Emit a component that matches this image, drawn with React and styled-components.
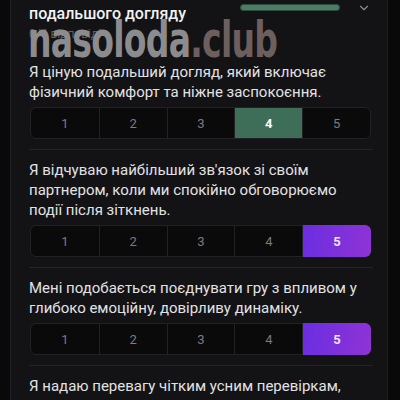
import React from "react";
import styled, { createGlobalStyle } from "styled-components";

const GlobalStyle = createGlobalStyle`
  html, body {
    margin: 0;
    padding: 0;
    background: #09090a;
    overflow: hidden;
  }
  body {
    font-family: Roboto, "Noto Sans", sans-serif;
  }
`;

const questions = [
  {
    text: "Я ціную подальший догляд, який включає фізичний комфорт та ніжне заспокоєння.",
    value: 4,
    tone: "green",
  },
  {
    text: "Я відчуваю найбільший зв'язок зі своїм партнером, коли ми спокійно обговорюємо події після зіткнень.",
    value: 5,
    tone: "purple",
  },
  {
    text: "Мені подобається поєднувати гру з впливом у глибоко емоційну, довірливу динаміку.",
    value: 5,
    tone: "purple",
  },
  {
    text: "Я надаю перевагу чітким усним перевіркам, після яких відчуваю спокій.",
    value: 0,
    tone: "purple",
  },
];

const Page = styled.div`
  position: relative;
  width: 400px;
  height: 400px;
  padding: 0 12px 0 10px;
  box-sizing: border-box;
`;

const Panel = styled.section`
  height: 100%;
  background: #131315;
  border-left: 1px solid #1f1f22;
  border-right: 1px solid #1f1f22;
  padding: 0 14px 0 18px;
  box-sizing: border-box;
`;

const Header = styled.header`
  display: flex;
  justify-content: space-between;
  align-items: flex-start;
`;

const TitleBlock = styled.div`
  display: flex;
  flex-direction: column;
  padding-top: 3px;
`;

const Title = styled.h2`
  margin: 0;
  font-size: 16px;
  font-weight: 500;
  line-height: 22px;
  color: #f2f2f2;
`;

const Subtitle = styled.div`
  font-size: 12px;
  color: #5e5e62;
  line-height: 16px;
  margin-top: 1px;
`;

const HeaderRight = styled.div`
  display: flex;
  align-items: flex-start;
  gap: 18px;
`;

const Progress = styled.div`
  width: 98px;
  height: 5px;
  margin-top: 5px;
  border-radius: 3px;
  background: #4b7c66;
  box-shadow: 0 0 0 1px #2f4a3e;
`;

const Chevron = styled.svg`
  width: 14px;
  height: 14px;
  color: #8b8b90;
  margin-top: 1px;
  margin-right: 2px;
`;

const List = styled.div`
  display: flex;
  flex-direction: column;
  margin-top: 20px;
`;

const Item = styled.div`
  display: flex;
  flex-direction: column;
  gap: 5px;
  padding: 0 0 10px;
  margin-bottom: 10px;
  border-bottom: 1px solid #242427;
`;

const Question = styled.p`
  margin: 0;
  font-size: 15px;
  line-height: 20px;
  color: #e2e2e4;
`;

const Scale = styled.div`
  display: grid;
  grid-template-columns: repeat(5, 1fr);
  height: 30px;
  margin: 0 2px 0 1px;
  border: 1px solid #222225;
  border-radius: 6px;
  background: #0a0a0b;
`;

const Option = styled.div`
  display: flex;
  align-items: center;
  justify-content: center;
  font-size: 13px;
  font-weight: ${(p) => (p.$on ? 700 : 400)};
  color: ${(p) => (p.$on ? (p.$tone === "green" ? "#ffffff" : "#f0e2ff") : "#7b7b80")};
  border-left: ${(p) => (p.$first ? "none" : "1px solid #222225")};
  background: ${(p) =>
    p.$on
      ? p.$tone === "green"
        ? "#3f6e58"
        : "linear-gradient(100deg, #6a2ee0 0%, #8f33d6 100%)"
      : "transparent"};
  border-radius: ${(p) => (p.$last ? "0 6px 6px 0" : p.$first ? "6px 0 0 6px" : "0")};
  margin: ${(p) => (p.$on && p.$last ? "-1px -1px -1px 0" : "0")};
`;

const Watermark = styled.div`
  position: absolute;
  left: 28px;
  top: 13px;
  font-family: "DejaVu Sans Condensed", "DejaVu Sans", sans-serif;
  font-weight: 700;
  font-size: 49px;
  letter-spacing: -1px;
  line-height: 56px;
  color: #8c8c8e;
  transform: scaleX(0.75);
  transform-origin: left top;
  pointer-events: none;
  white-space: nowrap;
`;

const Club = styled.span`
  color: #6e5f5f;
`;

export default function App() {
  return (
    <>
      <GlobalStyle />
      <Page>
        <Panel>
          <Header>
            <TitleBlock>
              <Title>подальшого догляду</Title>
              <Subtitle>0/4 відповіді</Subtitle>
            </TitleBlock>
            <HeaderRight>
              <Progress />
              <Chevron viewBox="0 0 24 24" fill="none" stroke="currentColor" strokeWidth="2" strokeLinecap="round" strokeLinejoin="round">
                <path d="M6 9l6 6 6-6" />
              </Chevron>
            </HeaderRight>
          </Header>
          <List>
            {questions.map((q, i) => (
              <Item key={i}>
                <Question>{q.text}</Question>
                <Scale>
                  {[1, 2, 3, 4, 5].map((n) => (
                    <Option key={n} $on={n === q.value} $tone={q.tone} $first={n === 1} $last={n === 5}>
                      {n}
                    </Option>
                  ))}
                </Scale>
              </Item>
            ))}
          </List>
        </Panel>
        <Watermark>
          nasoloda<Club>.club</Club>
        </Watermark>
      </Page>
    </>
  );
}
